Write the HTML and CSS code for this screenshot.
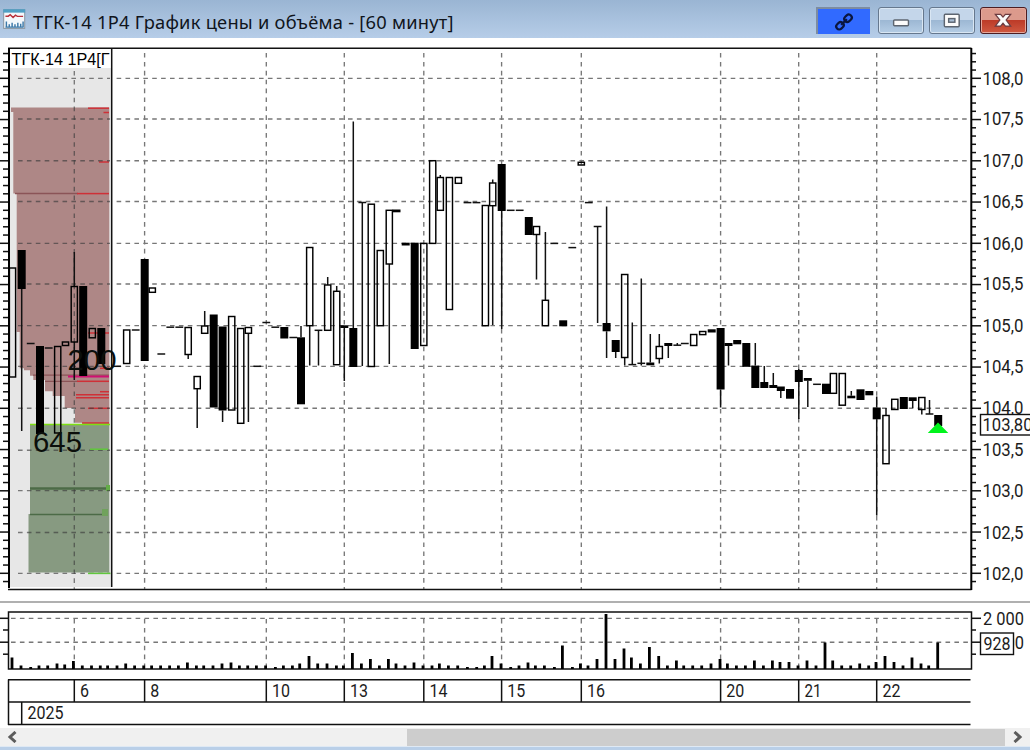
FILE: index.html
```html
<!DOCTYPE html>
<html lang="ru">
<head>
<meta charset="utf-8">
<title>ТГК-14 1Р4 График цены и объёма</title>
<link rel="stylesheet" href="styles.css">
</head>
<body>
<div class="window">
  <header class="titlebar">
    <svg class="app-icon" viewBox="0 0 24 22">
      <rect x=".7" y=".7" width="22" height="19.6" fill="#f4f8fc" stroke="#87919c"/>
      <rect x=".2" y=".2" width="23" height="3.6" fill="#4f9fc4"/>
      <path d="M2.5 7.5h3l2-1.500 3 3 2.500-2.500 2 1.200h6" fill="none" stroke="#b8323c" stroke-width="1.500"/>
      <path d="M3.500 13v6M6.500 16v3M9.500 14.500v4.500M12.500 16v3M15.500 14.500v4.500M18.500 15.500v3.500M21 13v6M2.500 19h19" fill="none" stroke="#3b78a8" stroke-width="1.500"/>
    </svg>
    <h1 class="title">ТГК-14 1Р4 График цены и объёма - [60 минут]</h1>
    <div class="buttons">
      <button class="link-btn" aria-label="link"><svg viewBox="0 0 18 18"><g fill="none" stroke="#0a1640" stroke-width="2.200" transform="rotate(-43 9 9)"><rect x="-.5" y="6" width="8" height="6" rx="3"/><rect x="10.500" y="6" width="8" height="6" rx="3"/><path d="M5 9h8"/></g></svg></button>
      <button class="win-btn" aria-label="minimize"><svg viewBox="0 0 46 26"><rect x="15.300" y="12.500" width="15.500" height="6" rx="1" fill="#fbfbfb" stroke="#5d6570" stroke-width="1.500"/></svg></button>
      <button class="win-btn" aria-label="maximize"><svg viewBox="0 0 46 26"><rect x="15" y="6.500" width="15.500" height="13" rx="1" fill="#fbfbfb" stroke="#5d6570" stroke-width="1.500"/><rect x="19.500" y="11" width="6.500" height="3.800" fill="#a9bfd6" stroke="#5d6570" stroke-width="1.500"/></svg></button>
      <button class="win-btn close" aria-label="close"><svg viewBox="0 0 46 26"><path d="M15 6.500h5.500l2.500 3 2.500-3H31l-4.700 6L31 18.800h-5.500l-2.500-3-2.500 3H15l4.700-6.300z" fill="#fbfbfb" stroke="#6b3b40" stroke-width="1.300"/></svg></button>
    </div>
  </header>
  <svg class="price-pane" id="price" viewBox="0 38 1030 563"></svg>
  <div class="splitter"></div>
  <svg class="volume-pane" id="volume" viewBox="0 603 1030 70"></svg>
  <svg class="time-axis" id="time" viewBox="0 673 1030 55"></svg>
  <div class="scrollbar">
    <svg class="arrow" viewBox="0 0 10 12"><path d="M8.500 1L3 6l5.500 5" fill="none" stroke="#5c5c5c" stroke-width="3"/></svg>
    <div class="thumb"></div>
    <svg class="arrow" viewBox="0 0 10 12"><path d="M1.500 1L7 6l-5.500 5" fill="none" stroke="#5c5c5c" stroke-width="3"/></svg>
  </div>
  <div class="frame-bottom"></div>
</div>
<script src="chart.js"></script>
</body>
</html>
```
FILE: styles.css
```css
* { box-sizing: border-box; }
body { margin: 0; background: #fff; font-family: "Noto Sans", "Open Sans", sans-serif; }
.window { width: 1030px; height: 750px; display: flex; flex-direction: column; overflow: hidden; background: #fff; }
.window > * { flex: none; }
.titlebar { height: 38px; display: flex; align-items: center; padding: 3px 3px 0 3px; background: linear-gradient(#9ab5d3, #b6cde8); }
.app-icon { width: 23px; height: 21px; display: block; margin-top: -3px; }
.title { margin: 2px 0 0 7px; font-size: 18.3px; line-height: 30px; font-weight: 400; color: #10151c; white-space: nowrap; letter-spacing: .24px; }
.buttons { display: flex; margin-left: auto; align-items: center; gap: 5px; }
.buttons button { padding: 0; display: block; }
.link-btn { width: 54px; height: 27px; margin-right: 3px; background: #316aff; border: 0; border-top: 2px solid #7d8ca0; border-left: 2px solid #7d8ca0; }
.link-btn svg { display: block; width: 18px; height: 18px; margin: 2px auto; overflow: visible; }
.win-btn { width: 46px; height: 27px; border: 1px solid #66788e; border-radius: 3px; background: linear-gradient(#c4d6ea 0 48%, #9db8d4 50%, #b5cde5); box-shadow: inset 0 0 0 1px #d9e6f3; }
.win-btn svg { display: block; width: 44px; height: 25px; }
.win-btn.close { width: 47px; border-color: #4c1d22; background: linear-gradient(#dc9a8c 0 46%, #bd3b28 50%, #cf5a42); box-shadow: inset 0 0 0 1px #e5a89c; }
.price-pane { display: block; width: 1030px; height: 563px; }
.splitter { height: 2px; background: #b0b0b0; }
.volume-pane { display: block; width: 1030px; height: 70px; }
.time-axis { display: block; width: 1030px; height: 55px; }
.scrollbar { height: 18px; background: #f0f0f0; display: flex; align-items: center; padding: 0 7px; }
.thumb { height: 17px; width: 598px; background: #cdcdcd; margin-left: auto; margin-right: 8px; }
.arrow { width: 10px; height: 12px; display: block; }
.frame-bottom { height: 4px; border-top: 1px solid #dfe9f4; background: #b9cfe8; }

.line { stroke: #111; stroke-width: 1.5; fill: none; }
.heavy { stroke: #000; stroke-width: 2; fill: none; }
.grid { stroke: #777; stroke-width: 1.35; stroke-dasharray: 4.6 4.3; fill: none; }
.grid-over { stroke: #3c3c3c; stroke-opacity: .65; }
.hollow { fill: none; stroke: #000; stroke-width: 1.45; }
.solid { fill: #000; }
.axis-text { font: 17.5px Roboto, "Liberation Sans", sans-serif; fill: #1c1c1c; }
.head-text { font: 17px "Liberation Sans", sans-serif; fill: #000; }
.big-text { font: 28.6px "Liberation Sans", sans-serif; fill: #0b0f0b; }
.tag { fill: #fff; stroke: #111; stroke-width: 1.4; }
.panel { fill: #e7e7e7; }
.asks { fill: #ae8786; }
.bids { fill: #879a81; }
.red { stroke: #cf3037; stroke-width: 1.5; }
.magenta { stroke: #d00f72; stroke-width: 1.8; }
.maroon { stroke: #8b5457; stroke-width: 1.3; }
.green { stroke: #60c83c; stroke-width: 1.5; }
.lime { stroke: #7ee012; stroke-width: 1.6; }
.moss { stroke: #4c6b47; stroke-width: 1.7; }
.moss-wide { stroke: #4c6b47; stroke-width: 2.6; }
.marker { fill: #00f41c; }
```
FILE: chart.js
```js
const NS = 'http://www.w3.org/2000/svg';

function add(root, tag, cls, attrs, text) {
  const e = document.createElementNS(NS, tag);
  e.setAttribute('class', cls);
  for (const k in attrs) e.setAttribute(k, attrs[k]);
  if (text !== undefined) e.textContent = text;
  root.appendChild(e);
  return e;
}
const line = (r, cls, x1, y1, x2, y2) => add(r, 'line', cls, { x1, y1, x2, y2 });
const label = (r, cls, x, y, s, w) =>
  add(r, 'text', cls, { x, y, textLength: w, lengthAdjust: 'spacingAndGlyphs' }, s);

const days = [[74.3, '6', 9], [144.6, '8', 9], [266.3, '10', 18], [344.3, '13', 18], [423.8, '14', 18],
  [501.6, '15', 18], [581.3, '16', 18], [720.6, '20', 18], [798.7, '21', 17], [876.7, '22', 18]];
const priceY = [78.3, 119, 160.7, 201.5, 243.4, 284, 325.6, 366.3, 408.2, 450.2, 490.6, 532.5, 573.3];

/* price pane */
const p = document.getElementById('price');
add(p, 'rect', 'panel', { x: 10, y: 68, width: 101, height: 519 });
add(p, 'path', 'asks', { d: 'M11 107.500H109.300V424H82.300V422.700H75V408H64.700V396H52.700V391.300H45V380H33.300V375.700H30V370.300H24V368.300H19.700V332H16.700V193.500H13.300V112H11Z' });
add(p, 'path', 'bids', { d: 'M30 424H109.300V572.500H28.500V514H30Z' });
[[15, 193.5, 78], [33, 375.2, 109], [45, 381.3, 78]].forEach(([a, y, b]) => line(p, 'maroon', a, y, b, y));
[[88, 108.2], [103.500, 112.500], [99, 162], [77, 193.600], [88, 333], [100, 368.300], [77, 381.300], [100, 391.700],
  [76, 394.700], [76, 397.700], [88, 408.300], [82, 423]].forEach(([a, y]) => line(p, 'red', a, y, 109, y));
line(p, 'magenta', 68, 376.500, 109, 376.500);
line(p, 'lime', 30, 424.500, 110, 424.500);
line(p, 'moss-wide', 30, 488.500, 106, 488.500);
line(p, 'moss', 30, 514.500, 102, 514.500);
add(p, 'rect', '', { x: 106, y: 485, width: 4, height: 6, fill: '#63ac47' });
add(p, 'rect', '', { x: 102, y: 509, width: 6, height: 7, fill: '#70a25c' });

priceY.forEach(y => { line(p, 'grid grid-over', 18, y, 110, y); line(p, 'grid', 116.600, y, 970, y); });
days.forEach(([x], i) => line(p, i ? 'grid' : 'grid grid-over', x, i ? 53 : 71, x, 589));
line(p, 'green', 90, 449.200, 108, 449.200);
line(p, 'green', 88, 573.400, 110.500, 573.400);

/* axis ticks: five minor steps for each half point */
for (let i = -3; i < 62; i++) {
  const y = 78.300 + i * 8.250;
  const major = i % 5 === 0;
  line(p, 'line', major ? 0 : 3, y, 8, y);
  line(p, 'line', 971, y, major ? 981 : 976, y);
}
line(p, 'line', 8, 48.300, 971.500, 48.300);
line(p, 'heavy', 9, 48, 9, 588);
line(p, 'line', 8, 589.500, 971.500, 589.500);
line(p, 'heavy', 971.300, 48, 971.300, 590);
add(p, 'rect', '', { x: 10, y: 49, width: 101, height: 19, fill: '#fff' });
line(p, 'line', 111.700, 48, 111.700, 587);
label(p, 'head-text', 11.500, 65, 'ТГК-14 1Р4[Г', 98);

/* x, high, body top, body bottom, low, kind: h hollow, f filled, d dash */
const candles = [
  [12.5,0,268,377,0,'h'],[21.7,0,250,289,431,'f'],[30.7,0,343.5,0,0,'d'],[40,0,346,434,0,'f'],[48.7,0,348,0,0,'d'],
  [57.7,0,346.5,433,0,'h'],[65.5,0,342,345.5,0,'h'],[74.3,252,286.5,342,380,'h'],[83.2,0,286,376,0,'f'],
  [92.3,0,328.5,337.8,0,'h'],[101.3,0,328,364,0,'f'],[117,0,366.3,0,0,'d'],[126.7,0,330,363.5,0,'h'],
  [135.7,0,330,0,0,'d'],[144.7,0,259,361,0,'f'],[152.3,0,288,292.3,0,'h'],[161.3,0,354,0,0,'d'],
  [170.3,0,327.2,0,0,'d'],[179.3,0,327.2,0,0,'d'],[188.2,0,327.5,354.5,359,'h'],[197.2,0,376.5,388.7,428,'h'],
  [204.7,311,326,333.3,0,'h'],[213.7,0,314.5,407.5,0,'f'],[222.6,0,326.5,410.5,422,'f'],[231.7,0,316.5,410,0,'h'],
  [240.7,0,328.5,423.3,0,'h'],[248.4,0,327.5,333.3,422,'h'],[257.3,0,366.3,0,0,'d'],[266.3,0,322.5,0,0,'d'],
  [275.3,0,327.2,0,0,'d'],[284.3,0,327,338.5,0,'f'],[293.3,0,337.5,0,0,'d'],[301,326,337.3,404.3,0,'f'],
  [309.7,0,247.5,325.7,365.5,'h'],[318.5,0,330.3,0,365.5,'d'],[327.7,277,285,330.3,0,'h'],[336.7,286,291.3,364.7,0,'h'],
  [344.3,0,325.3,328,381,'f'],[353.3,121.5,328,367,0,'f'],[362.3,0,202.5,0,366,'d'],[371.3,0,204.2,366.5,0,'h'],
  [380.3,0,250.5,325.7,0,'h'],[389.3,0,210.3,264,364,'h'],[396.5,0,209.5,212.3,0,'f'],[405.7,0,242.7,245.5,0,'f'],
  [414.7,0,242.7,349,0,'f'],[423.8,0,243.4,345.5,0,'h'],[432.7,0,160.7,243.4,0,'h'],[440.3,175,177.5,210.3,0,'h'],
  [449.4,0,177.5,309.5,0,'h'],[458.4,0,177.5,183.3,0,'h'],[467.5,0,202.6,0,0,'d'],[476.5,0,202.6,0,0,'d'],
  [485.4,0,205.5,325.7,0,'h'],[492.7,179.5,183,205.7,325,'h'],[501.7,0,164,211,329,'f'],[510.7,0,210.3,0,0,'d'],
  [519.7,0,210.3,0,0,'d'],[528.8,0,217,235,0,'f'],[536.5,0,226.5,234.5,279.5,'h'],[545.4,232,300.3,325.7,0,'h'],
  [554.3,0,243.4,0,0,'d'],[563.2,0,320.3,326.3,0,'f'],[572.3,0,247.6,0,0,'d'],[581.3,0,162.3,165,0,'h'],
  [588.8,0,202.6,0,0,'d'],[597.6,0,226.5,0,323,'d'],[606.6,206.5,323,331.3,358,'f'],[615.7,0,340,352,358,'f'],
  [624.7,0,274.5,357.5,365.5,'h'],[632.3,322.5,364.6,0,365,'d'],[641.3,278.5,363.3,0,365.5,'d'],[650.3,334,362.5,365.3,0,'f'],
  [659.3,334,346.5,358.5,363.5,'h'],[668.3,0,343,346,358,'f'],[677.3,343,345.2,0,0,'d'],[684.8,0,343.5,0,0,'d'],
  [693.7,0,334.5,345.5,0,'h'],[702.7,0,331.5,334.6,0,'h'],[711.7,0,329.3,332.5,0,'f'],[720.6,0,328,389.5,407.5,'f'],
  [728.5,0,343,346,365.5,'f'],[737.2,0,340,344.3,0,'f'],[746.3,0,343,366.8,0,'f'],[755.3,343,365.6,388,0,'f'],
  [764.3,366,382,388,0,'f'],[773.3,373,385,388,0,'f'],[780.8,0,386.5,391,398,'f'],[790,0,389,398.7,0,'f'],
  [798.8,369,370,382,419,'f'],[807.8,0,378,380.8,407,'f'],[817,0,384.3,0,0,'d'],[826,0,383.7,394,0,'f'],
  [833.4,0,373.5,393.3,0,'h'],[842.3,0,373.5,405.2,0,'h'],[851.3,391,395.7,398.3,0,'f'],[860.5,0,389.3,400,0,'f'],
  [869.3,0,391,395.3,0,'f'],[876.7,396.5,407.5,419.3,515.5,'f'],[886,408,415.5,463.7,0,'h'],[894.8,0,399.3,409.5,0,'h'],
  [903.8,0,397,409,0,'f'],[912.7,0,397.3,401,408,'f'],[921.8,0,397.5,409.5,414.5,'h'],[929.5,400,414,0,0,'d'],
  [938.2,0,415,426,0,'f']
];
for (const [x, hi, top, bot, lo, kind] of candles) {
  const end = bot || top;
  if (hi) line(p, 'line', x, hi, x, top);
  if (lo) line(p, 'line', x, end, x, lo);
  if (kind === 'h') add(p, 'rect', 'hollow', { x: x - 3.1, y: top, width: 6.2, height: bot - top });
  if (kind === 'f') add(p, 'rect', 'solid', { x: x - 4, y: top, width: 8, height: bot - top });
  if (kind === 'd') line(p, 'line', x - 3.9, top, x + 3.9, top);
}
add(p, 'path', 'marker', { d: 'M938 422.500L948.300 433H927.800Z' });
label(p, 'big-text', 67.500, 369.500, '200', 49);
label(p, 'big-text', 33, 452, '645', 49);

['108,0', '107,5', '107,0', '106,5', '106,0', '105,5', '105,0', '104,5', '104,0', '103,5', '103,0', '102,5', '102,0']
  .forEach((s, i) => label(p, 'axis-text', 982.500, priceY[i] + 6.200, s, 41));
add(p, 'rect', 'tag', { x: 980.500, y: 414.500, width: 60, height: 20.500 });
label(p, 'axis-text', 982.500, 431, '103,80', 50);

/* volume pane */
const v = document.getElementById('volume');
[618.300, 642.200].forEach(y => line(v, 'grid', 11, y, 970, y));
days.forEach(([x]) => line(v, 'grid', x, 619, x, 668));
[618.300, 630, 642.200, 654.200].forEach((y, i) => {
  line(v, 'line', i % 2 ? 3 : 0, y, 8, y);
  line(v, 'line', 971, y, i % 2 ? 976 : 981, y);
});
add(v, 'rect', 'line', { x: 8.500, y: 612, width: 963, height: 57 });
const bars = '12 11,21 3,30.7 1.5,39 3,47.7 3,57 5,64.7 4,73.4 7.5,82.3 3,91.5 3,100.3 3,107.6 3,117 3,125.7 5,134.6 3,143.7 3,151.6 3,160.6 3,169.6 3,178.4 3,187.4 6,196.4 3,203.7 3,213 3,222 5,231 6,239.4 3,247.7 3,256.4 3,265.6 3,275.4 1.5,283.4 3,292.4 3,299.7 5,309 12.5,317.7 5,327 5,336.4 3,343.4 3,352.4 15.5,361.4 5,370.4 9.5,379.4 3,388.4 9.5,396 5,405 3,414 6,423 3,432 3,439.4 5,448.4 3,457.7 3,467.4 1.5,476.7 1.5,484.4 3,492 12.5,501 5,510.7 1.5,519 3,528 6,535.4 3,544.4 3,554.4 1.5,562.4 23,572.4 1.5,580.4 5,588 3,597 9.5,606 54.500,615 9.5,624 20,631.4 11,640.4 5,649.4 21.5,658.7 12.5,667.4 3,676.4 8,683.7 3,692.7 3,701.7 3,711 5,720 9.5,727.4 5,736.4 3,745.4 3,754.4 8,763.4 3,772.4 8,780 6.5,789 6.5,798 3,807 8,816 3,825 26,832.7 8,841.7 3,850.7 3,859.7 5,868.7 3,876 6.5,885 12.5,894 6.5,903 3,912 11,921 5,928.7 3,937.7 26';
bars.split(',').forEach(b => {
  const [x, h] = b.split(' ').map(Number);
  add(v, 'rect', 'solid', { x: x - 1.400, y: 668.500 - h, width: 2.800, height: h + .5 });
});
label(v, 'axis-text', 983, 624.800, '2 000', 41);
label(v, 'axis-text', 983, 648.500, '1 000', 41);
add(v, 'rect', 'tag', { x: 980.500, y: 633, width: 33, height: 21.500 });
label(v, 'axis-text', 983.500, 650, '928', 27);

/* time axis */
const t = document.getElementById('time');
[679.700, 702, 724.500].forEach(y => line(t, 'line', 8, y, 970.500, y));
line(t, 'line', 8.500, 679.500, 8.500, 725);
line(t, 'line', 21.700, 702, 21.700, 724.500);
days.forEach(([x, s, w]) => {
  line(t, 'line', x, 679.500, x, 702);
  label(t, 'axis-text', x + 5.700, 696.800, s, w);
});
label(t, 'axis-text', 27.500, 719.300, '2025', 36);
```
